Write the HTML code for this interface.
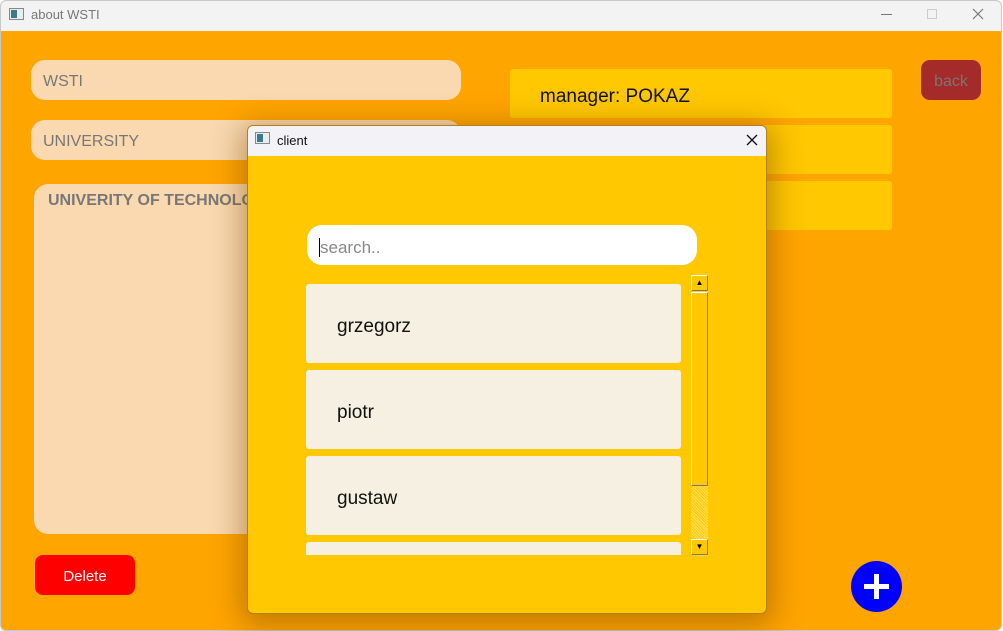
<!DOCTYPE html>
<html><head><meta charset="utf-8"><style>
body{margin:0;width:1003px;height:631px;overflow:hidden;background:#fff;font-family:"Liberation Sans",sans-serif;position:relative}
.a{position:absolute;box-sizing:border-box}
</style></head><body>
<div class="a" style="left:0;top:0;width:1002px;height:631px;border:1px solid #c8c8c8;border-radius:6px;overflow:hidden;background:#ffa500">
  <div class="a" style="left:0;top:0;width:1002px;height:30px;background:#f3f3f3"></div>
</div>
<div class="a" style="left:9px;top:8px;width:15px;height:12px;border:1px solid #888;background:#e8eef0"><div class="a" style="left:1px;top:1px;width:6px;height:8px;background:#3a7a8a"></div></div>
<div class="a" style="left:31px;top:7px;font-size:13px;color:#777">about WSTI</div>
<div class="a" style="left:881px;top:14px;width:11px;height:1px;background:#777"></div>
<div class="a" style="left:927px;top:9px;width:10px;height:10px;border:1px solid #ccc"></div>
<svg class="a" style="left:972px;top:8px" width="12" height="12"><path d="M1 1L11 11M11 1L1 11" stroke="#777" stroke-width="1.2"/></svg>

<div class="a" style="left:31px;top:60px;width:430px;height:40px;background:#fad9b0;border-radius:14px;padding:13px 12px;font-size:16px;color:#777">WSTI</div>
<div class="a" style="left:31px;top:120px;width:430px;height:40px;background:#fad9b0;border-radius:14px;padding:13px 12px;font-size:16px;color:#777">UNIVERSITY</div>
<div class="a" style="left:34px;top:184px;width:400px;height:350px;background:#fad9b0;border-radius:14px;padding:8px 14px;font-size:16px;color:#777;font-weight:bold;white-space:nowrap">UNIVERITY OF TECHNOLOGY</div>
<div class="a" style="left:35px;top:555px;width:100px;height:40px;background:#ff0000;border-radius:8px;color:#fff;font-size:15px;text-align:center;line-height:43px">Delete</div>

<div class="a" style="left:510px;top:69px;width:382px;height:49px;background:#ffc800;border-radius:3px;padding:17px 30px;font-size:19px;color:#111">manager: POKAZ</div>
<div class="a" style="left:510px;top:125px;width:382px;height:49px;background:#ffc800;border-radius:3px"></div>
<div class="a" style="left:510px;top:181px;width:382px;height:49px;background:#ffc800;border-radius:3px"></div>
<div class="a" style="left:921px;top:60px;width:60px;height:40px;background:#a52a2a;border-radius:9px;color:#777;font-size:16px;text-align:center;line-height:44px">back</div>
<div class="a" style="left:851px;top:561px;width:51px;height:51px;background:#0000ff;border-radius:50%"></div>
<div class="a" style="left:864px;top:584px;width:25px;height:5px;background:#fff"></div>
<div class="a" style="left:874px;top:574px;width:5px;height:25px;background:#fff"></div>

<div class="a" style="left:247px;top:125px;width:520px;height:489px;border:1px solid #b08020;border-radius:6px;overflow:hidden;background:#ffc800;box-shadow:0 6px 30px 6px rgba(120,70,0,.45)">
  <div class="a" style="left:0;top:0;width:520px;height:30px;background:#f2f2f7"></div>
</div>
<div class="a" style="left:255px;top:132px;width:15px;height:12px;border:1px solid #888;background:#e8eef0"><div class="a" style="left:1px;top:1px;width:6px;height:8px;background:#3a7a8a"></div></div>
<div class="a" style="left:277px;top:133px;font-size:13px;color:#111">client</div>
<svg class="a" style="left:746px;top:134px" width="12" height="12"><path d="M1 1L11 11M11 1L1 11" stroke="#111" stroke-width="1.3"/></svg>

<div class="a" style="left:307px;top:225px;width:390px;height:40px;background:#fff;border-radius:15px;padding:13px 12px;font-size:17px;color:#888"><span style="border-left:1px solid #000">search..</span></div>
<div class="a" style="left:306px;top:284px;width:375px;height:79px;background:#f5f0e1;border-radius:3px;padding:32px 31px;font-size:19px;color:#111">grzegorz</div>
<div class="a" style="left:306px;top:370px;width:375px;height:79px;background:#f5f0e1;border-radius:3px;padding:32px 31px;font-size:19px;color:#111">piotr</div>
<div class="a" style="left:306px;top:456px;width:375px;height:79px;background:#f5f0e1;border-radius:3px;padding:32px 31px;font-size:19px;color:#111">gustaw</div>
<div class="a" style="left:306px;top:542px;width:375px;height:13px;background:#f5f0e1;border-radius:3px 3px 0 0"></div>

<div class="a" style="left:691px;top:275px;width:17px;height:281px;background:repeating-linear-gradient(45deg,#ffe060 0 1px,#ffc800 1px 2px)"></div>
<div class="a" style="left:691px;top:275px;width:17px;height:16px;border:1px solid;border-color:#fff #777 #777 #fff;background:#ffc800;font-size:8px;text-align:center;line-height:14px">▲</div>
<div class="a" style="left:691px;top:292px;width:17px;height:194px;border:1px solid;border-color:#fff #777 #777 #fff;background:#ffc800"></div>
<div class="a" style="left:691px;top:539px;width:17px;height:16px;border:1px solid;border-color:#fff #777 #777 #fff;background:#ffc800;font-size:8px;text-align:center;line-height:14px">▼</div>
</body></html>
